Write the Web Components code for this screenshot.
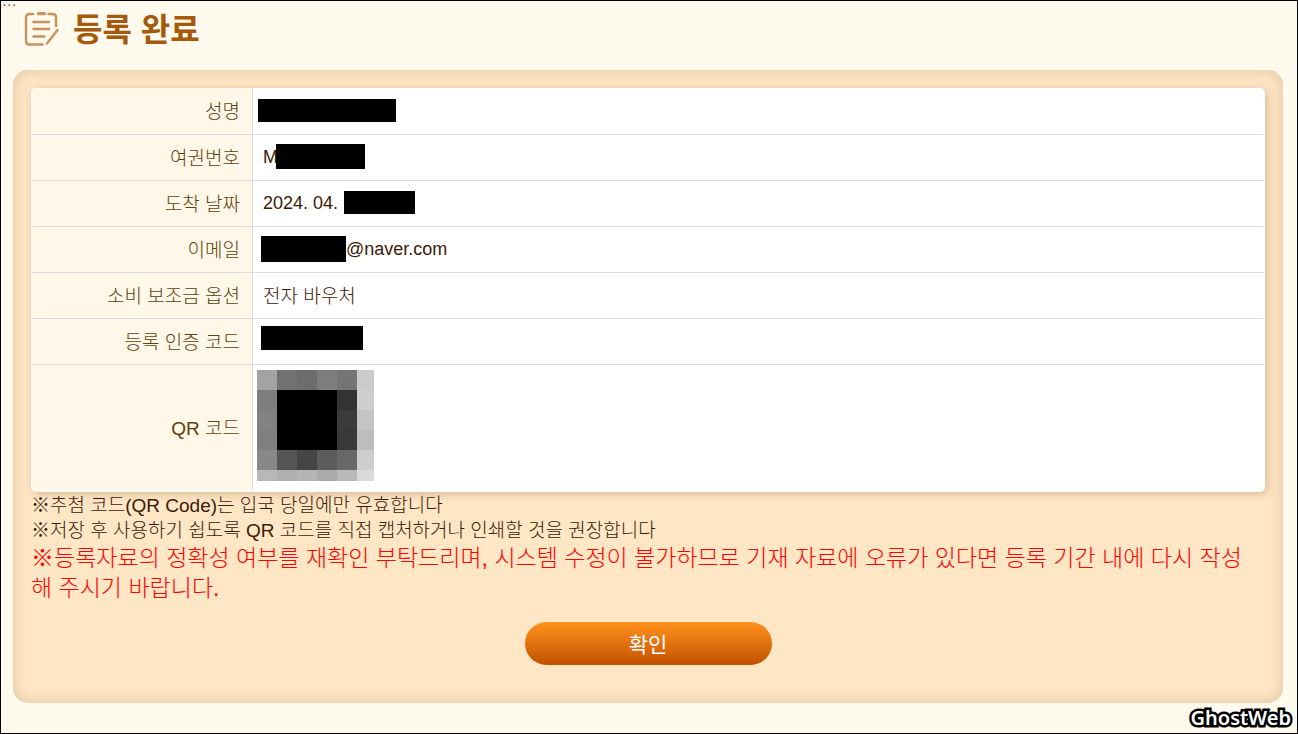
<!DOCTYPE html>
<html lang="ko">
<head>
<meta charset="utf-8">
<meta name="viewport" content="width=device-width, initial-scale=1">
<title>등록 완료</title>
<style>
  body {
    margin: 0;
    font-family: "Liberation Sans", "Noto Sans CJK KR", sans-serif;
    font-size: 18px;
    font-weight: 300;
    color: #3c1a08;
    background: #fff9ee;
  }
</style>
</head>
<body>
<result-page>
  <page-title slot="title">등록 완료</page-title>
  <result-panel>
    <result-table></result-table>
    <note-list>
      <p>※추첨 코드(QR Code)는 입국 당일에만 유효합니다</p>
      <p>※저장 후 사용하기 쉽도록 QR 코드를 직접 캡처하거나 인쇄할 것을 권장합니다</p>
      <p class="warn">※등록자료의 정확성 여부를 재확인 부탁드리며, 시스템 수정이 불가하므로 기재 자료에 오류가 있다면 등록 기간 내에 다시 작성해 주시기 바랍니다.</p>
    </note-list>
    <confirm-button>확인</confirm-button>
  </result-panel>
</result-page>

<script>
// small helper, every element here just renders its template once
const define = (tag, html) => {
  const template = document.createElement("template");
  template.innerHTML = html;

  class Component extends HTMLElement {
    constructor() {
      super();
      this.dom = this.attachShadow({ mode: "open" });
      this.dom.appendChild(template.content.cloneNode(true));
    }
  }

  customElements.define(tag, Component);
};

define("result-page", `
<style>
  :host {
    display: flex;
    flex-direction: column;
    position: relative;
    box-sizing: border-box;
    min-height: 100vh;
    padding: 0 14px 30px 12px;
    border: 1px solid #000;
  }

  .more {
    position: absolute;
    top: -1px;
    left: 1px;
    font: bold 8px/8px "DejaVu Sans Mono", monospace;
    color: #a01818;
    pointer-events: none;
  }

  .mark {
    position: absolute;
    right: 6px;
    bottom: 2px;
    font: 600 20px/26px "Noto Sans", sans-serif;
    color: #fff;
    -webkit-text-stroke: 5px #000;
    paint-order: stroke fill;
  }
</style>
<span class="more">...</span>
<slot name="title"></slot>
<slot></slot>
<span class="mark">GhostWeb</span>
`);

define("page-title", `
<style>
  :host {
    display: flex;
    align-items: center;
    gap: 12px;
    height: 55px;
    padding: 0 0 14px 10px;
  }

  svg {
    width: 38px;
    height: 38px;
    fill: none;
    stroke: #c6935a;
    stroke-width: 2.4;
    stroke-linecap: round;
    stroke-linejoin: round;
  }

  h1 {
    margin: 0;
    padding-top: 2px;
    font-size: 32px;
    line-height: 40px;
    font-weight: bold;
    color: #a45a0a;
  }
</style>
<svg viewBox="0 0 38 38" aria-hidden="true">
  <path d="M10 4H6.500Q3 4 3 7.500V31Q3 34.500 6.500 34.500H19.500"/>
  <path d="M25.500 4H29.500Q33 4 33 7.500V16"/>
  <path d="M15.500 3.700H21.500" stroke-width="3.200"/>
  <path d="M10.500 12H26M10.500 19H26M10.500 26.500H21.500"/>
  <path d="M34.500 20L24 33.500"/>
</svg>
<h1><slot></slot></h1>
`);

define("result-panel", `
<style>
  :host {
    display: block;
    flex: 1;
    padding: 18px;
    border-radius: 15px;
    background: #ffe6c5;
    box-shadow: inset 0 0 15px rgba(130, 100, 60, 0.25);
  }
</style>
<slot></slot>
`);

// blacked out part of a value, sized with --w and --h
define("redacted-bar", `
<style>
  :host {
    display: block;
    flex: none;
    width: var(--w, 100px);
    height: var(--h, 24px);
    margin-left: -2px;
    background: #000;
    z-index: 1;
  }
</style>
`);

const QR_SIZE = 20;
const QR_ROWS = [
  ["#a3a3a3", "#727272", "#6d6d6d", "#7d7d7d", "#757575", "#cbcbcb"],
  ["#7e7e7e", "#000", "#000", "#000", "#333", "#cecece"],
  ["#828282", "#000", "#000", "#000", "#3b3b3b", "#c4c4c4"],
  ["#7f7f7f", "#000", "#000", "#000", "#383838", "#bdbdbd"],
  ["#888", "#555", "#454545", "#5c5c5c", "#686868", "#cecece"],
  ["#b8b8b8", "#afafaf", "#b5b5b5", "#aaa", "#b8b8b8", "#dadada"]
];

const qrCells = QR_ROWS.map((row, y) =>
  row.map((fill, x) =>
    `<rect x="${x * QR_SIZE}" y="${y * QR_SIZE}" width="${QR_SIZE}" height="${QR_SIZE}" fill="${fill}"/>`
  ).join("")
).join("");

define("qr-code", `
<style>
  :host {
    display: block;
    margin-left: -6px;
  }

  svg {
    display: block;
    shape-rendering: crispEdges;
  }
</style>
<svg width="117" height="111" viewBox="0 0 117 111" role="img" aria-label="QR">${qrCells}</svg>
`);

define("result-table", `
<style>
  :host {
    display: block;
    padding: 0 1px 1px;
    border-radius: 5px;
    background: #fff;
    box-shadow: 2px 2px 8px rgba(130, 100, 60, 0.35);
    overflow: hidden;
  }

  table {
    width: 100%;
    border-collapse: separate;
    border-spacing: 0;
    table-layout: fixed;
  }

  th, td {
    box-sizing: border-box;
    height: 46px;
    padding: 0 10px 2px;
    border-bottom: 1px solid #dcdcdc;
    line-height: 26px;
  }

  tr:first-child > * {
    height: 47px;
  }

  th {
    width: 221px;
    padding: 2px 12px 0;
    border-right: 1px solid #dcdcdc;
    background: #fff7e7;
    color: #60400f;
    font-size: 19px;
    font-weight: inherit;
    text-align: right;
  }

  tr:last-child > * {
    height: 126px;
    border-bottom: 0;
  }

  .value {
    display: flex;
    align-items: center;
  }

  .name {
    margin-left: -3px;
  }

  .date {
    gap: 8px;
  }

  .korean {
    padding: 2px 10px 0;
    font-size: 19px;
  }

  .top {
    padding-top: 7px;
    vertical-align: top;
  }

  .code {
    padding-top: 5px;
    vertical-align: top;
  }
</style>
<table>
  <tr>
    <th scope="row">성명</th>
    <td><div class="value name"><redacted-bar style="--w: 138px; --h: 23px"></redacted-bar></div></td>
  </tr>
  <tr>
    <th scope="row">여권번호</th>
    <td><div class="value">M<redacted-bar style="--w: 89px; --h: 25px"></redacted-bar></div></td>
  </tr>
  <tr>
    <th scope="row">도착 날짜</th>
    <td><div class="value date">2024. 04.<redacted-bar style="--w: 71px; --h: 23px"></redacted-bar></div></td>
  </tr>
  <tr>
    <th scope="row">이메일</th>
    <td><div class="value"><redacted-bar style="--w: 85px; --h: 26px"></redacted-bar>@naver.com</div></td>
  </tr>
  <tr>
    <th scope="row">소비 보조금 옵션</th>
    <td class="korean">전자 바우처</td>
  </tr>
  <tr>
    <th scope="row">등록 인증 코드</th>
    <td class="top"><div class="value"><redacted-bar style="--w: 102px; --h: 24px"></redacted-bar></div></td>
  </tr>
  <tr>
    <th scope="row">QR 코드</th>
    <td class="code"><qr-code></qr-code></td>
  </tr>
</table>
`);

define("note-list", `
<style>
  :host {
    display: block;
    padding: 1px 10px 0 0;
  }

  ::slotted(p) {
    margin: 0;
    font-size: 19px;
    line-height: 25px;
  }

  ::slotted(.warn) {
    font-size: 23px;
    line-height: 30px;
    color: #f00;
    word-break: break-all;
  }
</style>
<slot></slot>
`);

define("confirm-button", `
<style>
  :host {
    display: flex;
    justify-content: center;
    padding-top: 19px;
  }

  button {
    width: 247px;
    height: 43px;
    padding: 0 0 2px;
    border: 0;
    border-radius: 22px;
    background: linear-gradient(#ff921c, #c25100);
    color: #fff;
    font-family: inherit;
    font-size: 21px;
    font-weight: 400;
    cursor: pointer;
  }
</style>
<button type="button"><slot></slot></button>
`);
</script>
</body>
</html>
